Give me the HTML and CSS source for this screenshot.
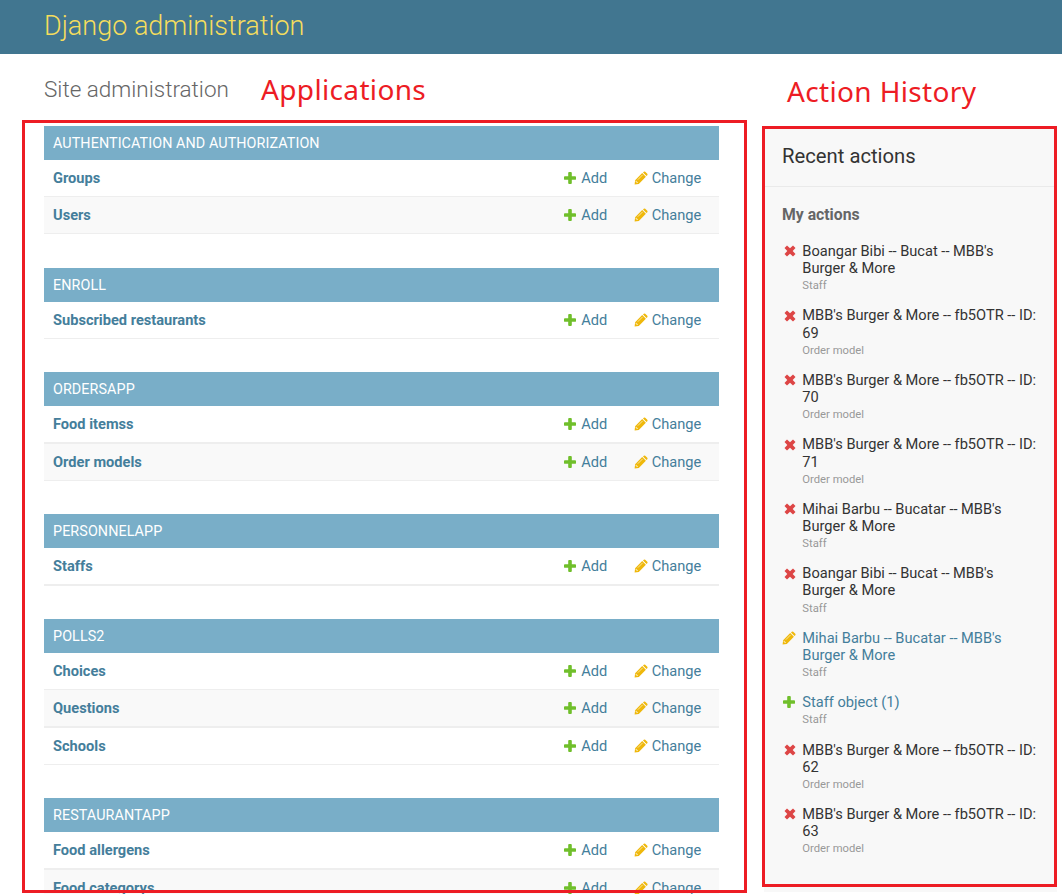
FILE: index.html
```
<!DOCTYPE html>
<html lang="en">
<head>
<meta charset="utf-8">
<title>Site administration | Django site admin</title>
<link rel="stylesheet" href="styles.css">
</head>
<body>
<svg class="sprite" aria-hidden="true">
  <symbol id="plus" viewBox="0 0 14 14"><path fill="#70bf2b" d="M5.2 1.9q0-.9.9-.9h1.8q.9 0 .9.9v3.3h3.3q.9 0 .9.9v1.8q0 .9-.9.9H8.800v3.300q0 .9-.9.9H6.100q-.9 0-.9-.9V8.800H1.900q-.9 0-.9-.9V6.100q0-.9.9-.9h3.300z"/></symbol>
  <symbol id="pencil" viewBox="0 0 14 14"><path fill="#efb80b" d="M.6 13.400 1.100 9.200 8.200 2.100 11.900 5.800 4.800 12.900zM9 1.500l.8-.8q.7-.6 1.400 0l2.100 2.100q.6.700 0 1.400l-.8.800z"/><path fill="none" stroke="#fff" stroke-width=".6" d="M1.500 10.300h1.200v1.200h1.200M3.800 8.700 8.600 3.900"/></symbol>
  <symbol id="cross" viewBox="0 0 14 14"><path fill="#dd4646" d="m4 1.500 3 2.800 3-2.800 2.500 2.500L9.700 7l2.800 3-2.500 2.500L7 9.700l-3 2.800L1.500 10l2.800-3-2.800-3z"/></symbol>
</svg>
<header class="header"><h1>Django administration</h1></header>
<div class="titles">
  <h2>Site administration</h2>
  <span class="note note-apps">Applications</span>
  <span class="note note-history">Action History</span>
</div>
<div class="content">
  <main class="apps" id="apps"></main>
  <aside class="sidebar">
    <h2>Recent actions</h2>
    <h3>My actions</h3>
    <ul class="actions" id="actions"></ul>
  </aside>
</div>
<div class="frame frame-apps"></div>
<div class="frame frame-history"></div>
<script src="app.js"></script>
</body>
</html>
```
FILE: styles.css
```
body { margin: 0; height: 894px; overflow: hidden; position: relative; background: #fff; font-family: Roboto, "Liberation Sans", sans-serif; font-size: 14.625px; color: #333; }
h1, h2, h3, ul { margin: 0; padding: 0; font-weight: 400; }
.sprite { display: none; }
.header { height: 54px; background: #417690; padding-left: 44px; }
.header h1 { font-size: 27px; font-weight: 300; line-height: 53px; color: #f5dd5d; }
.titles { display: flex; height: 72px; padding-left: 44px; line-height: 71px; white-space: nowrap; }
.titles h2 { width: 217px; font-size: 22.5px; font-weight: 300; color: #666; }
.note { font-family: "Noto Sans", sans-serif; font-size: 28px; letter-spacing: .35px; color: #ed1c24; line-height: 70px; }
.note-apps { width: 526px; }
.note-history { line-height: 74px; }
.content { display: grid; grid-template-columns: 675px 293px; column-gap: 45px; height: 768px; padding-left: 44px; align-items: start; }
.module { margin-bottom: 33px; }
.module:first-child { margin-bottom: 34px; }
.module:last-child { margin-bottom: 0; }
.caption { height: 34px; line-height: 35px; padding-left: 9px; background: #79aec8; color: #fff; font-size: 14.350px; letter-spacing: .08px; }
.row { display: grid; grid-template-columns: 510.300px 70.500px 1fr; height: 36px; line-height: 36px; padding-left: 9px; border-bottom: 1px solid #eee; color: #447e9b; }
.row.thick { border-bottom-width: 2px; }
.row:nth-child(odd) { background: #f9f9f9; }
.row b { font-weight: 700; }
.link { display: flex; align-items: center; gap: 4px; }
.link svg { width: 14px; height: 14px; }
.sidebar { height: 766px; background: #f8f8f8; }
.sidebar h2 { height: 60px; line-height: 61px; padding-left: 18px; font-size: 20.250px; border-bottom: 1px solid #eaeaea; }
.sidebar h3 { padding: 18px 0 0 18px; line-height: 19px; font-size: 15.750px; font-weight: 700; color: #666; }
.actions { list-style: none; padding: 19px 0 0 18px; }
.actions li { display: grid; grid-template-columns: 20.300px 1fr; line-height: 17.100px; margin-bottom: 11.700px; white-space: nowrap; }
.actions svg { width: 14px; height: 14px; margin-top: 1.200px; }
.actions .cross svg { margin-left: 1px; }
.actions .linked { color: #447e9b; }
.actions small { display: block; font-size: 11.250px; line-height: 18.600px; color: #999; }
.frame { position: absolute; box-sizing: border-box; border: 3px solid #ed1c24; }
.frame-apps { left: 22px; top: 120px; width: 725px; height: 773px; }
.frame-history { left: 762px; top: 126px; width: 295px; height: 761px; }
```
FILE: app.js
```
const icon = name => `<svg><use href="#${name}"/></svg>`;

// A leading "*" marks a row with the thicker rule.
const modules = [
  ["Authentication and Authorization", ["Groups", "Users"]],
  ["Enroll", ["Subscribed restaurants"]],
  ["Ordersapp", ["*Food itemss", "Order models"]],
  ["Personnelapp", ["*Staffs"]],
  ["Polls2", ["Choices", "*Questions", "Schools"]],
  ["Restaurantapp", ["*Food allergens", "Food categorys"]]
];

document.getElementById("apps").innerHTML = modules.map(([name, rows]) => `
  <section class="module">
    <div class="caption">${name.toUpperCase()}</div>
    ${rows.map(r => `<div class="row ${r[0] === "*" ? "thick" : ""}"><b>${r.replace("*", "")}</b>
      <span class="link">${icon("plus")}Add</span><span class="link">${icon("pencil")}Change</span></div>`).join("")}
  </section>`).join("");

const order = id => ["cross", `MBB's Burger &amp; More -- fb5OTR -- ID:<br>${id}`, "Order model"];
const boangar = ["cross", "Boangar Bibi -- Bucat -- MBB's<br>Burger &amp; More", "Staff"];
const mihai = "Mihai Barbu -- Bucatar -- MBB's<br>Burger &amp; More";
const actions = [
  boangar, order(69), order(70), order(71),
  ["cross", mihai, "Staff"], boangar,
  ["pencil", mihai, "Staff"], ["plus", "Staff object (1)", "Staff"],
  order(62), order(63)
];

document.getElementById("actions").innerHTML = actions.map(([type, text, kind]) => `
  <li class="${type}">${icon(type)}<div><span class="${type === "cross" ? "" : "linked"}">${text}</span><small>${kind}</small></div></li>`).join("");
```
